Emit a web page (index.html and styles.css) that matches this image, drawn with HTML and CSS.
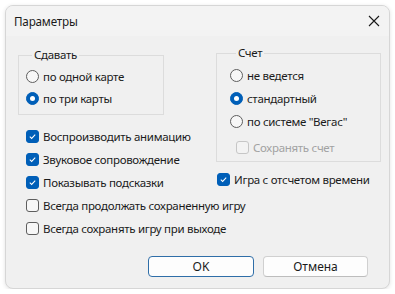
FILE: index.html
```html
<!DOCTYPE html>
<html lang="ru">
<head>
<meta charset="utf-8">
<title>Параметры</title>
<link rel="stylesheet" href="styles.css">
</head>
<body>
<div class="window">
  <div class="titlebar">
    <span class="title">Параметры</span>
    <svg class="close" width="12" height="12" viewBox="0 0 12 12"><path d="M1 1 L11 11 M11 1 L1 11" stroke="#1a1a1a" stroke-width="1.1" fill="none"/></svg>
  </div>
  <div class="content">
    <div class="cols">
      <div class="col col-left">
        <fieldset class="group group-deal">
          <legend>Сдавать</legend>
          <label class="opt"><span class="radio"></span>по одной карте</label>
          <label class="opt"><span class="radio on"></span>по три карты</label>
        </fieldset>
        <div class="checks">
          <label class="opt"><span class="check on"><svg viewBox="0 0 13 13"><path d="M3.3 6.7 L5.5 8.8 L9.7 4.4" stroke="#fff" stroke-width="1.2" fill="none"/></svg></span>Воспроизводить анимацию</label>
          <label class="opt"><span class="check on"><svg viewBox="0 0 13 13"><path d="M3.3 6.7 L5.5 8.8 L9.7 4.4" stroke="#fff" stroke-width="1.2" fill="none"/></svg></span>Звуковое сопровождение</label>
          <label class="opt"><span class="check on"><svg viewBox="0 0 13 13"><path d="M3.3 6.7 L5.5 8.8 L9.7 4.4" stroke="#fff" stroke-width="1.2" fill="none"/></svg></span>Показывать подсказки</label>
          <label class="opt"><span class="check"></span>Всегда продолжать сохраненную игру</label>
          <label class="opt"><span class="check"></span>Всегда сохранять игру при выходе</label>
        </div>
      </div>
      <div class="col col-right">
        <fieldset class="group group-score">
          <legend>Счет</legend>
          <label class="opt"><span class="radio"></span>не ведется</label>
          <label class="opt"><span class="radio on"></span>стандартный</label>
          <label class="opt"><span class="radio"></span>по системе "Вегас"</label>
          <label class="opt sub disabled"><span class="check"></span>Сохранять счет</label>
        </fieldset>
        <label class="opt timed"><span class="check on"><svg viewBox="0 0 13 13"><path d="M3.3 6.7 L5.5 8.8 L9.7 4.4" stroke="#fff" stroke-width="1.2" fill="none"/></svg></span>Игра с отсчетом времени</label>
      </div>
    </div>
    <div class="buttons">
      <button class="btn default">OK</button>
      <button class="btn">Отмена</button>
    </div>
  </div>
</div>
</body>
</html>
```
FILE: styles.css
```css
* { box-sizing: border-box; }
html, body { margin: 0; padding: 0; background: #ffffff; }
body {
  font-family: "Noto Sans", "Open Sans", sans-serif;
  font-size: 11.5px;
  letter-spacing: -0.3px;
  color: #1b1b1b;
  padding: 5px 0 0 5px;
}
.window {
  width: 385px;
  height: 284px;
  border: 1px solid #d6d6d6;
  border-radius: 8px;
  background: #f0f0f0;
  overflow: hidden;
  display: flex;
  flex-direction: column;
  box-shadow: 0 1px 4px rgba(0,0,0,0.12);
}
.titlebar {
  height: 30px;
  flex: none;
  background: #f3f3f3;
  display: flex;
  align-items: center;
  justify-content: space-between;
  padding: 0 9px 0 8px;
}
.title { font-size: 11.7px; line-height: 16px; letter-spacing: -0.2px; }
.close { display: block; margin-top: -1px; }
.content {
  flex: 1;
  display: flex;
  flex-direction: column;
  padding: 0 21px 11px 12px;
}
.cols {
  display: grid;
  grid-template-columns: 146px 165px;
  column-gap: 52px;
  align-items: start;
}
.col { display: flex; flex-direction: column; }
.col-left { padding-top: 11px; }
.col-right { padding-top: 9px; }
.group {
  margin: 0;
  border: 1px solid #dcdcdc;
  display: flex;
  flex-direction: column;
  min-width: 0;
}
.group legend {
  line-height: 16px;
  padding: 0 2px;
}
.group-deal { padding: 2px 0 5px 7px; }
.group-deal legend { margin-left: 6px; }
.group-score { padding: 3px 0 2px 13px; }
.group-score legend { margin-left: 6px; }
.opt {
  display: flex;
  align-items: center;
  height: 22px;
  gap: 4px;
  white-space: nowrap;
}
.group-score .opt { height: 23px; }
.radio, .check {
  width: 13px;
  height: 13px;
  flex: none;
  border: 1px solid #5e5e5e;
  background: #f7f7f7;
}
.radio { border-radius: 50%; position: relative; }
.radio.on {
  background: #005fb8;
  border-color: #005fb8;
}
.radio.on::after {
  content: "";
  position: absolute;
  left: 3px; top: 3px;
  width: 5px; height: 5px;
  border-radius: 50%;
  background: #ffffff;
}
.check { border-radius: 3px; display: flex; }
.check svg { width: 11px; height: 11px; display: block; }
.check.on { background: #005fb8; border-color: #005fb8; }
.opt.sub { margin-left: 6px; margin-top: 3px; height: 23px; }
.disabled { color: #a2a2a2; }
.disabled .check { border-color: #c6c6c6; background: #f3f3f3; }
.checks {
  display: flex;
  flex-direction: column;
  margin-top: 10px;
  padding-left: 8px;
}
.checks .opt { height: 23px; }
.timed { margin-top: 6px; padding-left: 1px; height: 23px; }
.buttons {
  margin-top: auto;
  display: flex;
  justify-content: flex-end;
  gap: 9px;
}
.btn {
  font-family: inherit;
  font-size: 12px;
  letter-spacing: 0;
  color: #1b1b1b;
  width: 106px;
  height: 21px;
  padding: 0;
  background: #fdfdfd;
  border: 1px solid #d0d0d0;
  border-bottom-color: #bdbdbd;
  border-radius: 4px;
}
.btn + .btn { width: 105px; }
.btn.default { border-color: #2f6ea8; }
```
